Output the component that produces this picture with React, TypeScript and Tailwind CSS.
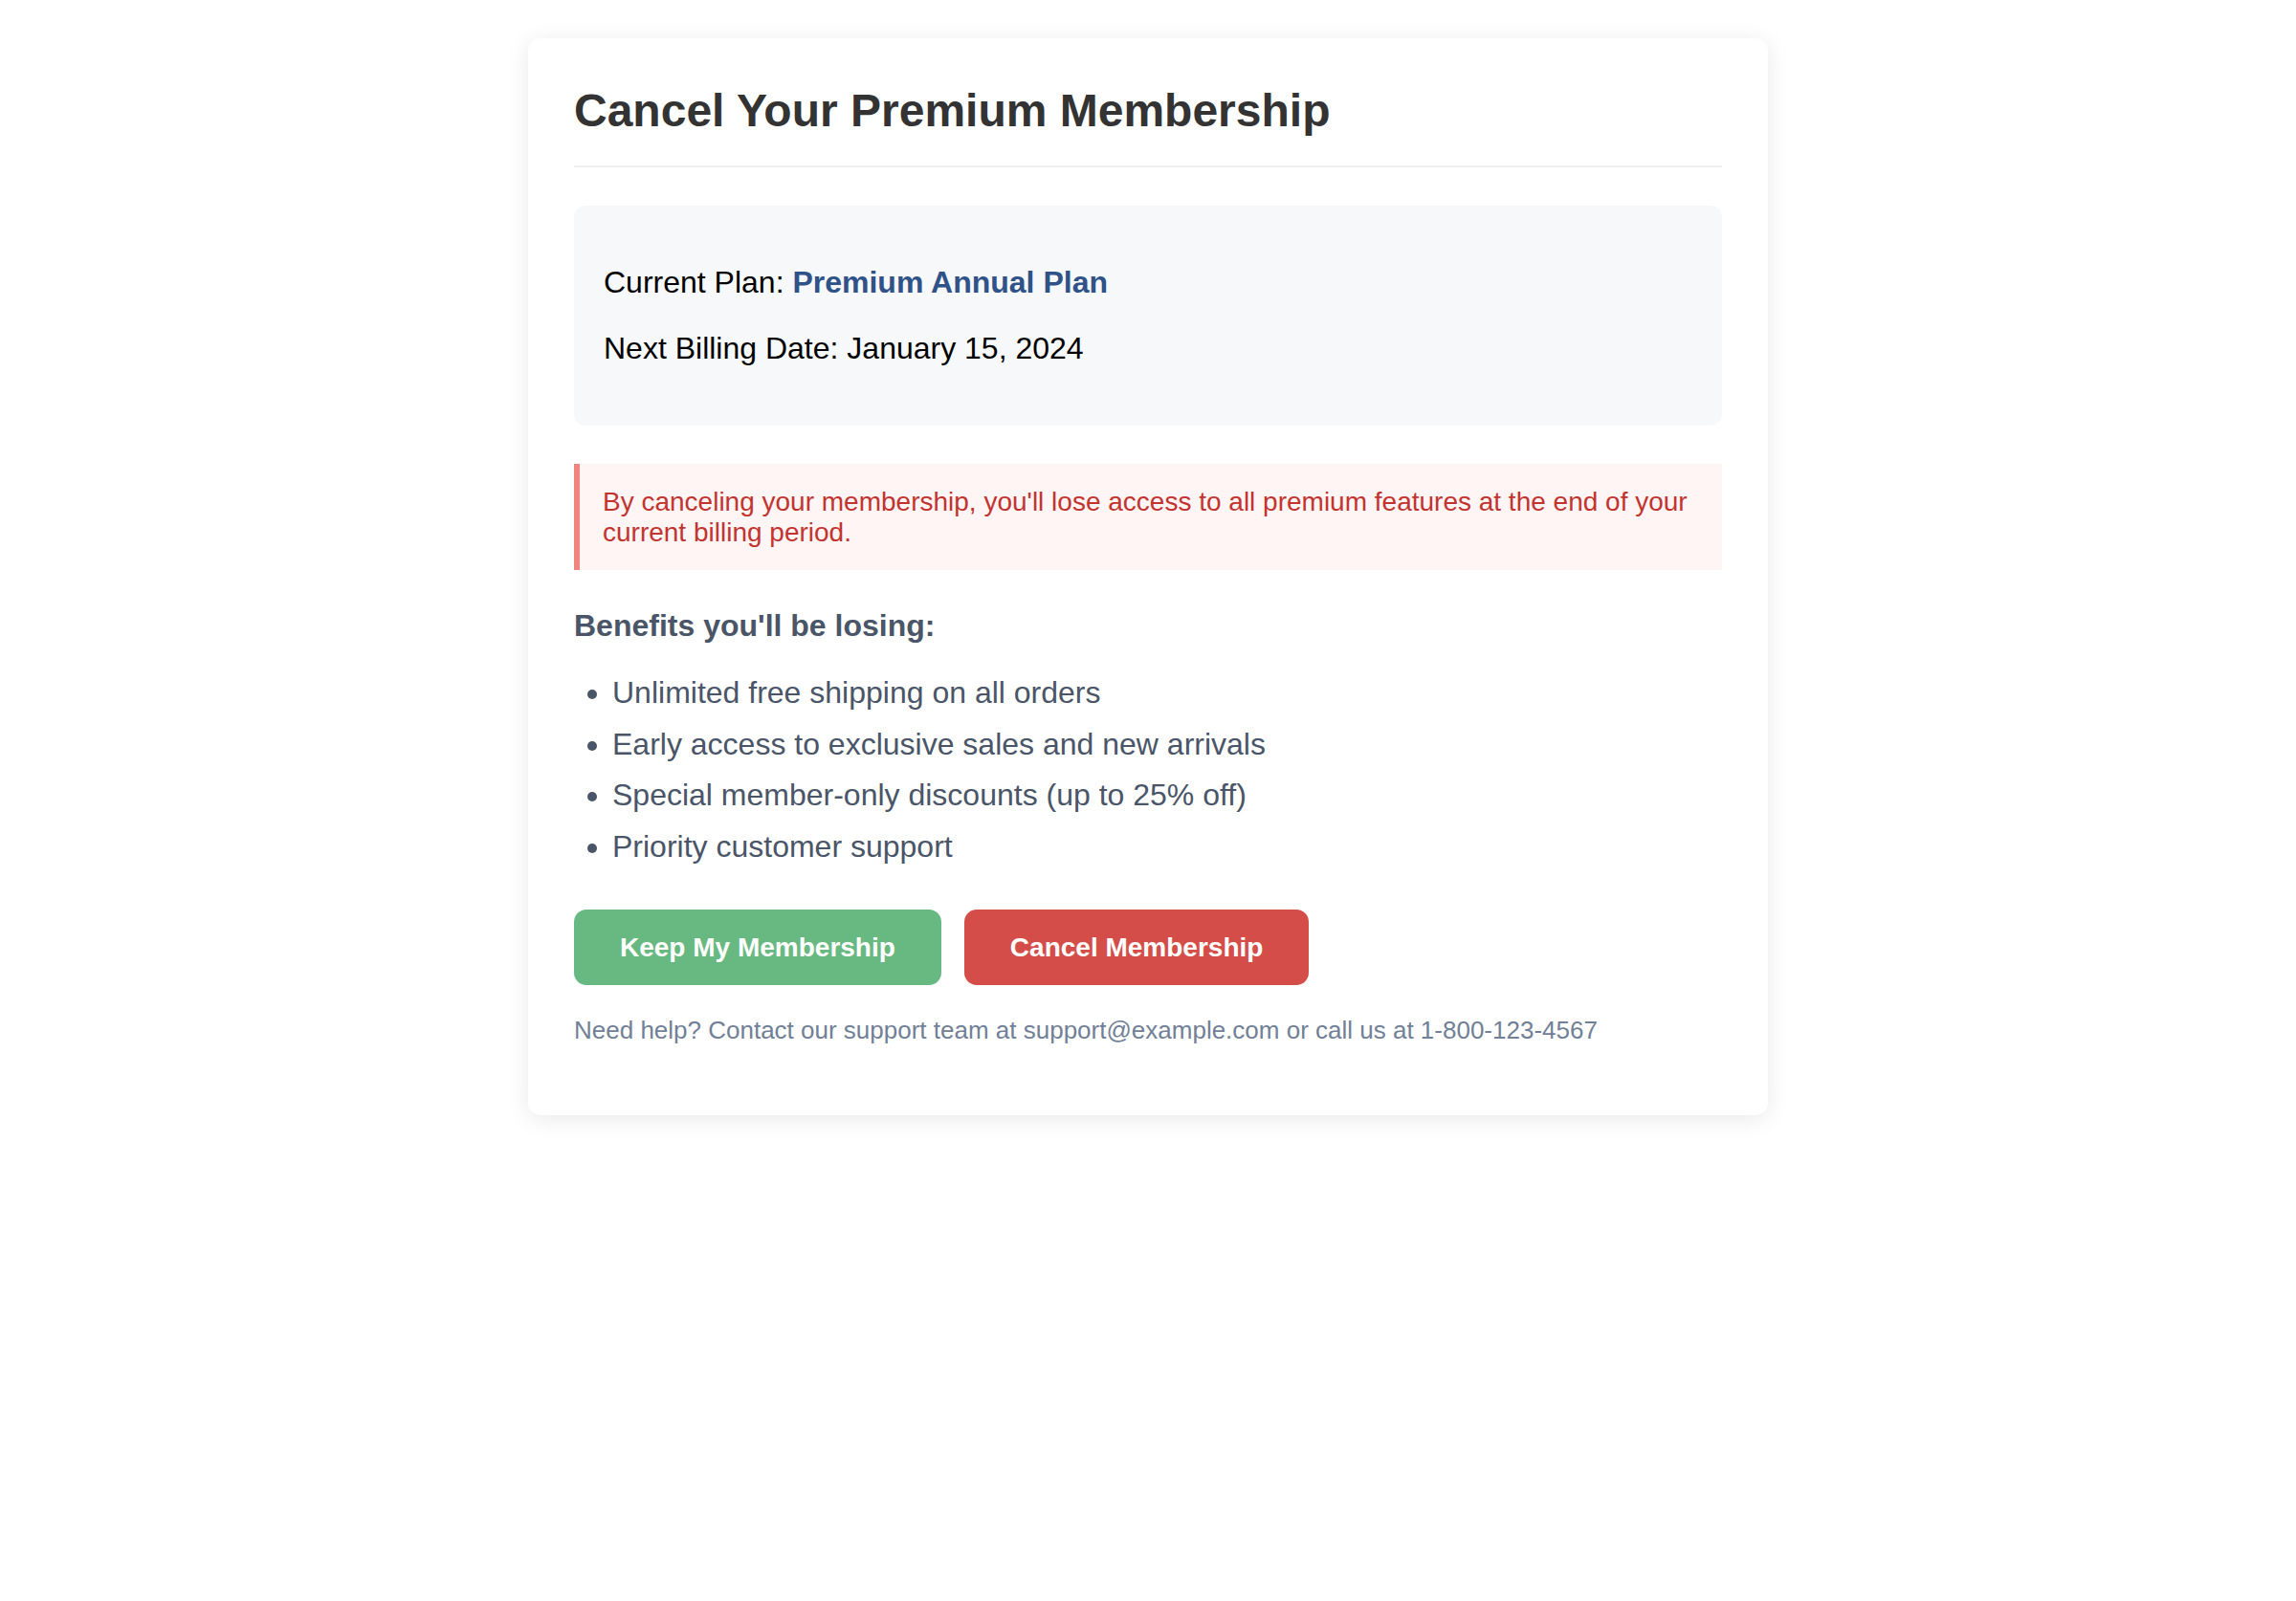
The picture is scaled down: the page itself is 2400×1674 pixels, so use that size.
const benefits = [
  'Unlimited free shipping on all orders',
  'Early access to exclusive sales and new arrivals',
  'Special member-only discounts (up to 25% off)',
  'Priority customer support',
];

export default function App() {
  return (
    <div className="min-h-screen bg-white pt-[40px] font-['Liberation_Sans',Arial,sans-serif]">
      <div className="mx-auto w-[1296px] rounded-[13px] bg-white p-[48px] shadow-[0_4px_24px_rgba(0,0,0,0.09)]">
        <h1 className="border-b-2 border-[#efefef] pb-[30px] text-[48px] font-bold leading-[55px] text-[#333333]">
          Cancel Your Premium Membership
        </h1>

        {/* plan details */}
        <div className="mt-[40px] flex flex-col gap-[32px] rounded-[12px] bg-[#f7f8fa] px-[31px] py-[62px] text-[32px] leading-[37px] text-black">
          <p>
            Current Plan: <span className="font-bold text-[#2f5288]">Premium Annual Plan</span>
          </p>
          <p>Next Billing Date: January 15, 2024</p>
        </div>

        <div className="mt-[40px] border-l-[6px] border-[#f0847e] bg-[#fff5f5] px-[24px] py-[24px] text-[28px] leading-[31.5px] text-[#c2342f]">
          By canceling your membership, you'll lose access to all premium features at the end of your current billing
          period.
        </div>

        <h3 className="mt-[40px] text-[32px] font-bold leading-[37px] text-[#4a5568]">Benefits you'll be losing:</h3>
        <ul className="mt-[33px] list-disc pl-[40px] text-[32px] leading-[37px] text-[#4a5568]">
          {benefits.map((b) => (
            <li key={b} className="mb-[16.5px]">
              {b}
            </li>
          ))}
        </ul>

        <div className="mt-[47px] flex gap-[24px]">
          <button className="rounded-[13px] bg-[#68b881] px-[48px] py-[24px] text-[28px] font-bold leading-[31px] text-white">
            Keep My Membership
          </button>
          <button className="rounded-[13px] bg-[#d44d48] px-[48px] py-[24px] text-[28px] font-bold leading-[31px] text-white">
            Cancel Membership
          </button>
        </div>

        <p className="mb-[26px] mt-[33px] text-[26px] leading-[29.4px] text-[#718096]">
          Need help? Contact our support team at support@example.com or call us at 1-800-123-4567
        </p>
      </div>
    </div>
  );
}
